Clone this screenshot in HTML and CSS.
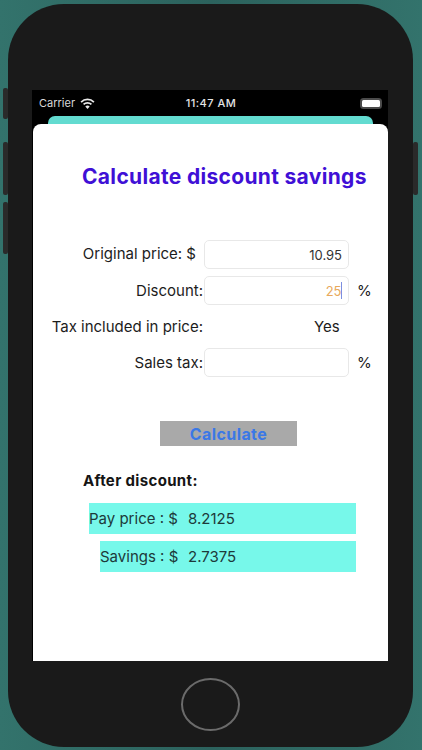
FILE: index.html
```html
<!DOCTYPE html>
<html lang="en">
<head>
<meta charset="utf-8">
<title>Calculate discount savings</title>
<link rel="stylesheet" href="styles.css">
</head>
<body>
<div class="phone">
  <span class="side side-l1"></span>
  <span class="side side-l2"></span>
  <span class="side side-l3"></span>
  <span class="side side-r1"></span>
  <div class="screen">
    <div class="status">
      <div class="status-left">
        <span>Carrier</span>
        <svg class="wifi" viewBox="0 0 16 12" width="15" height="11">
          <path d="M1 4.4 A10 10 0 0 1 15 4.4" fill="none" stroke="#e8e8e8" stroke-width="1.9"/>
          <path d="M3.7 7 A6.2 6.2 0 0 1 12.3 7" fill="none" stroke="#e8e8e8" stroke-width="1.9"/>
          <path d="M8 12 L5.6 9.3 A3.4 3.4 0 0 1 10.4 9.3 Z" fill="#e8e8e8"/>
        </svg>
      </div>
      <span class="time">11:47 AM</span>
      <div class="battery"><span class="battery-fill"></span></div>
    </div>
    <div class="back-card"></div>
    <div class="sheet">
      <h1 class="title">Calculate discount savings</h1>
      <div class="form">
        <div class="row">
          <span class="label label-price">Original price: $</span>
          <div class="field">10.95</div>
        </div>
        <div class="row">
          <span class="label">Discount:</span>
          <div class="field field-active">25<span class="caret"></span></div>
          <span class="unit">%</span>
        </div>
        <div class="row">
          <span class="label">Tax included in price:</span>
          <span class="yes">Yes</span>
        </div>
        <div class="row">
          <span class="label">Sales tax:</span>
          <div class="field"></div>
          <span class="unit">%</span>
        </div>
      </div>
      <div class="button">Calculate</div>
      <h2 class="after">After discount:</h2>
      <div class="result result-pay"><span class="result-label">Pay price : $</span><span>8.2125</span></div>
      <div class="result result-save"><span class="result-label">Savings : $</span><span>2.7375</span></div>
    </div>
  </div>
  <div class="home-area"><span class="home"></span></div>
</div>
</body>
</html>
```

FILE: styles.css
```css
* { box-sizing: border-box; }
html, body { margin: 0; height: 100%; }
body {
  width: 422px;
  height: 750px;
  overflow: hidden;
  padding: 4px 9px 3px 8px;
  background: linear-gradient(90deg, #33736c 0%, #2c625d 50%, #33736c 100%);
  font-family: Inter, "Liberation Sans", sans-serif;
  color: #1c1c1c;
}
.phone {
  position: relative;
  width: 405px;
  height: 743px;
  background: #1a1a1a;
  border-radius: 56px;
  padding-top: 86px;
  display: flex;
  flex-direction: column;
  align-items: flex-start;
}
.side { position: absolute; background: #2a2a2a; border-radius: 2px; width: 5px; }
.side-l1 { left: -5px; top: 84px; height: 31px; }
.side-l2 { left: -5px; top: 138px; height: 53px; }
.side-l3 { left: -5px; top: 198px; height: 52px; }
.side-r1 { right: -5px; top: 138px; height: 53px; }
.screen {
  margin-left: 24px;
  width: 356px;
  height: 571px;
  background: #000;
  display: flex;
  flex-direction: column;
  position: relative;
}
.status {
  height: 26px;
  flex: none;
  padding: 0 6px 0 7px;
  display: flex;
  align-items: center;
  justify-content: space-between;
  color: #d8d8d8;
  font-size: 11px;
}
.status-left { display: flex; align-items: center; gap: 5px; width: 108px; }
.wifi { display: block; }
.time { color: #e4e4e4; font-weight: 500; letter-spacing: 0.5px; margin-left: -1px; }
.battery {
  width: 22px;
  height: 11px;
  border: 2px solid #4a4a4a;
  border-radius: 3.5px;
  background: #4a4a4a;
  margin-left: 84px;
}
.battery-fill { display: block; width: 100%; height: 100%; background: #fff; border-radius: 1.5px; }
.back-card {
  flex: none;
  height: 8px;
  margin: 0 15px 0 16px;
  background: #63dbd0;
  border-radius: 7px 7px 0 0;
}
.sheet {
  flex: 1;
  margin-left: 1px;
  background: #fff;
  border-radius: 8px 8px 0 0;
  padding-top: 40px;
  overflow: hidden;
}
.title {
  margin: 0 0 0 49px;
  font-size: 21px;
  line-height: 25px;
  font-weight: 700;
  letter-spacing: 0.32px;
  color: #3f10d6;
  white-space: nowrap;
}
.form {
  margin-top: 51px;
  display: flex;
  flex-direction: column;
  gap: 7px;
}
.row {
  display: flex;
  align-items: center;
  height: 29px;
  font-size: 15px;
}
.label {
  width: 170px;
  text-align: right;
  white-space: nowrap;
  flex: none;
}
.label-price { padding-right: 7px; margin-top: -2px; }
.field {
  margin-left: 1px;
  width: 145px;
  height: 29px;
  border: 1px solid #e8e8e8;
  border-radius: 5px;
  background: #fff;
  display: flex;
  align-items: center;
  justify-content: flex-end;
  padding-right: 6px;
  font-size: 13px;
  color: #333;
  flex: none;
}
.field-active { color: #e8a95c; }
.caret { width: 1.5px; height: 17px; background: #7d8fe0; margin-left: -1px; }
.unit { margin-left: 8px; font-size: 15px; }
.yes { margin-left: 111px; }
.button {
  margin: 44px 0 0 127px;
  width: 137px;
  height: 25px;
  background: #a9a9a9;
  color: #3b78e6;
  font-size: 16px;
  font-weight: 700;
  letter-spacing: 0.4px;
  display: flex;
  align-items: center;
  justify-content: center;
}
.after {
  margin: 25px 0 0 50px;
  font-size: 15px;
  line-height: 20px;
  font-weight: 700;
  letter-spacing: 0.35px;
  color: #151515;
}
.result {
  height: 31px;
  background: #77f8ea;
  display: flex;
  align-items: center;
  font-size: 15px;
  color: #1d3a3a;
  width: 267px;
  margin: 12px 0 0 56px;
}
.result-pay .result-label { width: 99px; flex: none; }
.result-save { width: 256px; margin: 7px 0 0 67px; }
.result-save .result-label { width: 88px; flex: none; }
.home-area {
  flex: 1;
  width: 100%;
  display: flex;
  align-items: center;
  justify-content: center;
}
.home {
  width: 59px;
  height: 53px;
  border: 2px solid #6b6b6b;
  border-radius: 50%;
}
```
